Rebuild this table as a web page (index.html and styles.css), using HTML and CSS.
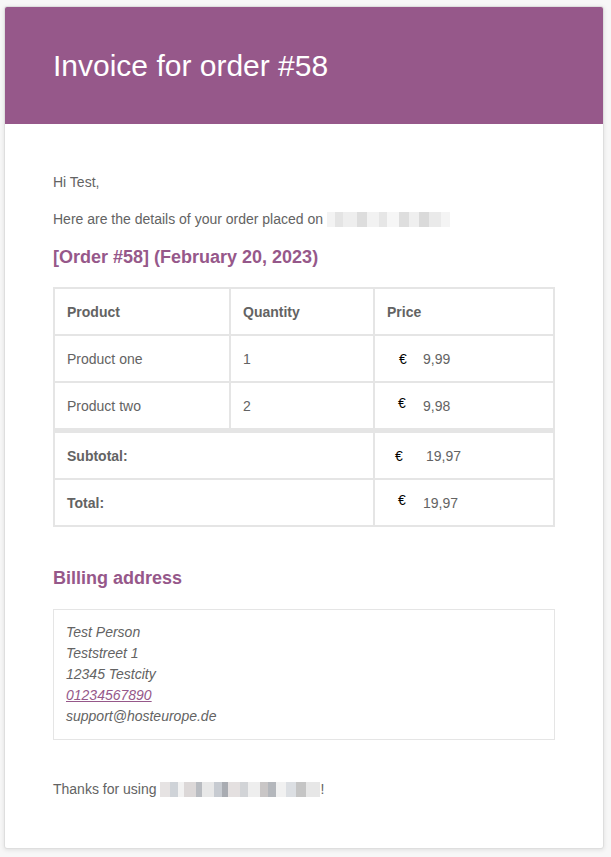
FILE: index.html
```html
<!DOCTYPE html>
<html>
<head>
<meta charset="utf-8">
<link rel="stylesheet" href="styles.css">
</head>
<body>
<div class="wrapper">
  <div class="header">
    <h1>Invoice for order #58</h1>
  </div>
  <div class="content">
    <p>Hi Test,</p>
    <p>Here are the details of your order placed on <span class="blur blur-date"></span></p>
    <h2>[Order #58] (February 20, 2023)</h2>
    <table class="order">
      <thead>
        <tr>
          <th class="c1">Product</th>
          <th class="c2">Quantity</th>
          <th class="c3">Price</th>
        </tr>
      </thead>
      <tbody>
        <tr>
          <td>Product one</td>
          <td>1</td>
          <td><span class="cur">€</span><span class="amt">9,99</span></td>
        </tr>
        <tr>
          <td>Product two</td>
          <td>2</td>
          <td><span class="cur up">€</span><span class="amt">9,98</span></td>
        </tr>
      </tbody>
      <tfoot>
        <tr class="first">
          <th colspan="2">Subtotal:</th>
          <td><span class="cur left">€</span><span class="amt">19,97</span></td>
        </tr>
        <tr>
          <th colspan="2">Total:</th>
          <td><span class="cur up">€</span><span class="amt">19,97</span></td>
        </tr>
      </tfoot>
    </table>
    <h2>Billing address</h2>
    <address class="address">
      Test Person<br>
      Teststreet 1<br>
      12345 Testcity<br>
      <a href="#">01234567890</a><br>
      support@hosteurope.de
    </address>
    <p class="thanks">Thanks for using <span class="blur blur-site"></span>!</p>
  </div>
</div>
</body>
</html>
```

FILE: styles.css
```css
html, body {
  margin: 0;
  padding: 0;
  background: #f7f7f7;
}
body {
  padding: 6px 0 8px 4px;
  font-family: "Liberation Sans", Arial, Helvetica, sans-serif;
  color: #636363;
}
.wrapper {
  width: 598px;
  background: #fff;
  border: 1px solid #dedede;
  border-radius: 3px;
  box-shadow: 0 1px 4px rgba(0, 0, 0, 0.1);
  overflow: hidden;
}
.header {
  background: #96588a;
  padding: 36px 48px;
}
.header h1 {
  margin: 0;
  font-size: 30px;
  font-weight: 300;
  line-height: 45px;
  color: #fff;
}
.content {
  padding: 48px 48px 32px;
  font-size: 14px;
  line-height: 21px;
}
p {
  margin: 0 0 16px;
}
h2 {
  margin: 0 0 18px;
  font-size: 18px;
  line-height: 23px;
  font-weight: bold;
  color: #96588a;
}
.blur {
  display: inline-block;
  vertical-align: -3px;
  height: 15px;
}
.blur-date {
  width: 123px;
  background: linear-gradient(90deg,
    #f3f3f3 0px, #f3f3f3 8px,
    #e4e4e4 8px, #e4e4e4 16px,
    #eeeeee 16px, #eeeeee 30px,
    #dddddd 30px, #dddddd 40px,
    #f2f2f2 40px, #f2f2f2 52px,
    #e6e6e6 52px, #e6e6e6 60px,
    #f6f6f6 60px, #f6f6f6 72px,
    #dedede 72px, #dedede 82px,
    #efefef 82px, #efefef 92px,
    #dadada 92px, #dadada 102px,
    #eaeaea 102px, #eaeaea 114px,
    #f4f4f4 114px, #f4f4f4 123px);
}
.blur-site {
  width: 160px;
  background: linear-gradient(90deg,
    #e6e3e3 0px, #e6e3e3 10px,
    #cfd3d8 10px, #cfd3d8 18px,
    #f2f2f2 18px, #f2f2f2 24px,
    #dcd8d8 24px, #dcd8d8 36px,
    #b9bcc1 36px, #b9bcc1 42px,
    #e8e8e8 42px, #e8e8e8 54px,
    #c7cbd1 54px, #c7cbd1 62px,
    #a9acb2 62px, #a9acb2 68px,
    #e4e0e0 68px, #e4e0e0 80px,
    #d2d4d7 80px, #d2d4d7 88px,
    #eeeeee 88px, #eeeeee 100px,
    #c9c6c6 100px, #c9c6c6 108px,
    #b4b7bc 108px, #b4b7bc 116px,
    #f1f1f1 116px, #f1f1f1 126px,
    #dcdfe3 126px, #dcdfe3 136px,
    #c5c5c5 136px, #c5c5c5 146px,
    #e7e7e7 146px, #e7e7e7 160px);
}
table.order {
  width: 502px;
  border-collapse: separate;
  border-spacing: 0;
  border: 1px solid #e5e5e5;
  margin: 0 0 40px;
  color: #636363;
  font-size: 14px;
  line-height: 21px;
}
.order th, .order td {
  border: 1px solid #e5e5e5;
  padding: 13px 12px 11px;
  text-align: left;
  vertical-align: middle;
}
.order th {
  font-weight: bold;
}
.order .c1 { width: 150px; }
.order .c2 { width: 118px; }
.order tfoot tr.first th,
.order tfoot tr.first td {
  border-top-width: 4px;
}
.cur {
  display: inline-block;
  width: 24px;
  margin-left: 12px;
  color: #000;
}
.cur.left {
  margin-left: 8px;
  width: 31px;
}
.cur.up {
  margin-left: 11px;
  width: 25px;
  position: relative;
  top: -3px;
}
.amt {
  color: #636363;
}
.address {
  margin: 19px 0 0;
  padding: 12px;
  border: 1px solid #e5e5e5;
  font-style: italic;
  color: #636363;
}
.address a {
  color: #96588a;
}
.thanks {
  margin-top: 39px;
}
```
